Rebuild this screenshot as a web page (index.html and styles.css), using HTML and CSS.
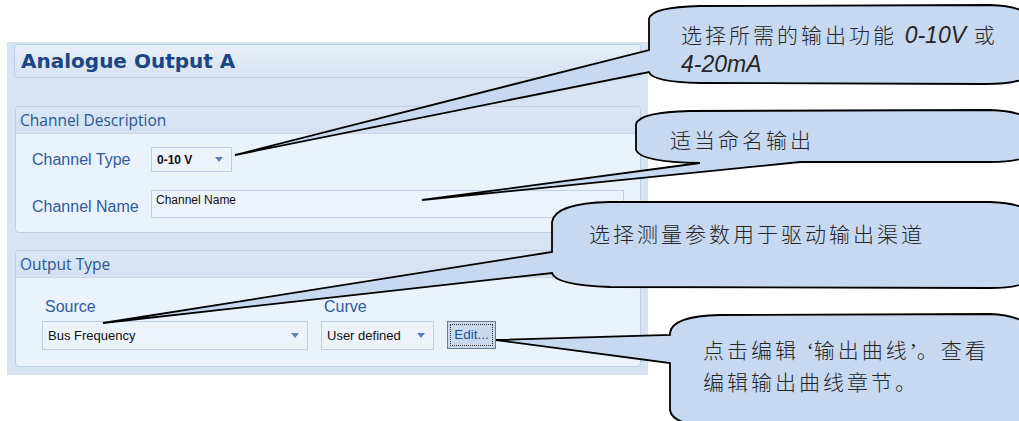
FILE: index.html
```html
<!DOCTYPE html>
<html lang="zh-CN">
<head>
  <meta charset="UTF-8" />
  <title>Analogue Output A</title>
  <link rel="stylesheet" href="styles.css">
</head>
<body>
  <div class="panel">
    <div class="panel-title">Analogue Output A</div>

    <section class="group">
      <div class="group-head">Channel Description</div>
      <div class="group-body desc">
        <span class="label">Channel Type</span>
        <div class="combo combo-type"><span class="val strong">0-10 V</span><span class="arrow"></span></div>
        <span class="label">Channel Name</span>
        <div class="textbox">Channel Name</div>
      </div>
    </section>

    <section class="group">
      <div class="group-head">Output Type</div>
      <div class="group-body out">
        <div class="field">
          <span class="label">Source</span>
          <div class="combo combo-source"><span class="val">Bus Frequency</span><span class="arrow"></span></div>
        </div>
        <div class="field">
          <span class="label">Curve</span>
          <div class="combo combo-curve"><span class="val">User defined</span><span class="arrow"></span></div>
        </div>
        <button class="edit"><span>Edit...</span></button>
      </div>
    </section>
  </div>

  <!-- callouts drawn over the form -->
  <svg class="callouts" width="1019" height="421" viewBox="0 0 1019 421">
    <path d="M649,50 L649,19 Q651,7 700,6 L990,5 Q1020,6 1030,16 L1030,75 Q1020,84 985,84 L700,83 Q652,82 649,72 L235,155 Z" />
    <path d="M636,150 L636,124 Q640,112 690,111 L990,110 Q1020,111 1030,120 L1030,155 Q1020,162 990,162 L800,162 L422,200 L700,163 Q640,162 636,150 Z" />
    <path d="M552,252 L552,222 Q555,203 610,202 L990,202 Q1020,203 1030,212 L1030,280 Q1020,288 990,288 L610,287 Q555,285 552,273 L103,323 Z" />
    <path d="M670,335 L670,333 Q672,316 720,315 L990,314 Q1015,315 1030,325 L1030,420 Q1020,426 990,426 L700,425 Q672,423 670,410 L670,363 L496,340 Z" />
  </svg>

  <div class="note note-type">选择所需的输出功能 <i>0-10V</i> 或<br><i>4-20mA</i></div>
  <div class="note note-name">适当命名输出</div>
  <div class="note note-source">选择测量参数用于驱动输出渠道</div>
  <div class="note note-edit">点击编辑 <span class="q">‘</span>输出曲线<span class="q">’</span>。查看<br>编辑输出曲线章节。</div>
</body>
</html>
```

FILE: styles.css
```css
body {
  margin: 0;
  background-color: #fff;
  font-family: 'Liberation Sans', Arial, sans-serif;
  position: relative;
  width: 1019px;
  height: 421px;
  overflow: hidden;
}
.panel {
  margin: 42px 0 0 7px;
  width: 627px;
  padding: 2px 7px 8px 7px;
  background-color: #d5e3f3;
}
.panel-title {
  height: 32px;
  line-height: 32px;
  padding-left: 6px;
  border: 1px solid #bccfe6;
  border-radius: 3px;
  background: linear-gradient(#e7eff9, #d6e3f3);
  font-family: 'DejaVu Sans', sans-serif;
  font-weight: bold;
  font-size: 20px;
  color: #1c4584;
}
.group {
  margin-top: 28px;
  margin-left: 1px;
  border: 1px solid #bccfe5;
  border-radius: 4px;
  background-color: #eaf2fb;
}
.group + .group {
  margin-top: 17px;
}
.group-head {
  height: 26px;
  line-height: 26px;
  padding-left: 4px;
  background: linear-gradient(#dae6f5, #d3e1f2);
  border-bottom: 1px solid #c9d9ec;
  border-radius: 3px 3px 0 0;
  font-family: 'Open Sans', sans-serif;
  font-size: 15.5px;
  color: #2a5590;
}
.label {
  font-size: 16px;
  color: #2f5c9c;
}
.desc {
  display: grid;
  grid-template-columns: 119px 1fr;
  grid-template-rows: 25px 28px;
  row-gap: 18px;
  align-items: center;
  padding: 13px 15px 14px 16px;
}
.desc .label {
  line-height: 25px;
}
.desc .label:nth-of-type(2) {
  margin-top: 4px;
}
.combo {
  display: flex;
  align-items: center;
  justify-content: space-between;
  box-sizing: border-box;
  border: 1px solid #bdd0e8;
  background-color: #edf3fb;
  padding: 0 8px 0 5px;
  font-size: 13px;
  color: #111;
}
.combo-type {
  width: 81px;
  height: 25px;
}
.strong {
  font-weight: bold;
  font-size: 12px;
}
.arrow {
  width: 0;
  height: 0;
  border-left: 4.5px solid transparent;
  border-right: 4.5px solid transparent;
  border-top: 5px solid #5b82bd;
}
.textbox {
  box-sizing: border-box;
  height: 28px;
  width: 473px;
  border: 1px solid #bdd0e8;
  background-color: #edf3fb;
  padding: 2px 4px;
  font-size: 12px;
  color: #111;
}
.out {
  display: flex;
  align-items: flex-end;
  gap: 13px;
  padding: 20px 0 16px 26px;
}
.field {
  display: flex;
  flex-direction: column;
  gap: 5px;
}
.field .label {
  padding-left: 3px;
  line-height: 18px;
}
.combo-source {
  width: 266px;
  height: 29px;
}
.combo-curve {
  width: 113px;
  height: 29px;
}
.edit {
  box-sizing: border-box;
  width: 49px;
  height: 28px;
  margin-bottom: 1px;
  padding: 2px;
  border: 1px solid #6b7b90;
  background-color: #c9daef;
  font-family: 'Liberation Sans', Arial, sans-serif;
  font-size: 13.5px;
  color: #24508f;
}
.edit span {
  display: block;
  height: 100%;
  line-height: 20px;
  border: 1px dotted #333;
  box-sizing: border-box;
}
.callouts {
  position: absolute;
  left: 0;
  top: 0;
}
.callouts path {
  fill: #c6d9f1;
  stroke: #000;
  stroke-width: 1.8;
  stroke-linejoin: miter;
}
.note {
  position: absolute;
  font-family: 'Noto Sans CJK SC', sans-serif;
  font-weight: 300;
  font-size: 21px;
  letter-spacing: 3px;
  line-height: 28px;
  color: #262626;
  white-space: nowrap;
}
.note i {
  font-family: 'Liberation Sans', Arial, sans-serif;
  font-weight: normal;
  font-size: 23px;
  letter-spacing: 0;
}
.note .q {
  font-family: 'Liberation Serif', serif;
  font-weight: normal;
  letter-spacing: 0;
}
.note-type {
  left: 681px;
  top: 20px;
}
.note-name {
  left: 670px;
  top: 125px;
}
.note-source {
  left: 589px;
  top: 219px;
}
.note-edit {
  left: 703px;
  top: 334px;
  line-height: 30px;
}
```
